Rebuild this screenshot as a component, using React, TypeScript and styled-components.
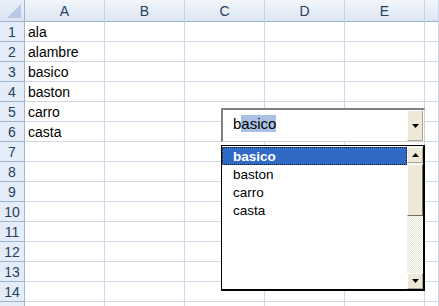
import styled, { createGlobalStyle } from "styled-components";

const GlobalStyle = createGlobalStyle`
  html, body {
    margin: 0;
    padding: 0;
    background: #ffffff;
    overflow: hidden;
  }
`;

const COLS = ["A", "B", "C", "D", "E", ""];
const ROW_COUNT = 15;
const LABELED_ROWS = 14;
const DATA: Record<number, string> = {
  1: "ala",
  2: "alambre",
  3: "basico",
  4: "baston",
  5: "carro",
  6: "casta",
};
const ITEMS = ["basico", "baston", "carro", "casta"];

const Sheet = styled.div`
  position: relative;
  display: grid;
  grid-template-columns: 25px repeat(5, 80px) 1fr;
  grid-template-rows: 22px;
  grid-auto-rows: 20px;
  width: 439px;
  height: 306px;
  overflow: hidden;
  font-family: "Liberation Sans", Arial, sans-serif;
  font-size: 14px;
  color: #000;
`;

const Corner = styled.div`
  position: relative;
  background: linear-gradient(#e9eff8, #dbe5f2);
  border-right: 1px solid #9eb6ce;
  border-bottom: 1px solid #9eb6ce;
  box-sizing: border-box;

  &::after {
    content: "";
    position: absolute;
    right: 3px;
    bottom: 3px;
    width: 0;
    height: 0;
    border-left: 14px solid transparent;
    border-bottom: 14px solid #b7c9e2;
  }
`;

const ColHeader = styled.div`
  display: flex;
  align-items: center;
  justify-content: center;
  background: linear-gradient(#f3f6fb 0%, #e7eef7 50%, #dce6f3 100%);
  border-right: 1px solid #c5d4e6;
  border-bottom: 1px solid #9eb6ce;
  box-sizing: border-box;
  color: #27415f;
  font-size: 14px;
`;

const RowHeader = styled.div`
  display: flex;
  align-items: flex-end;
  justify-content: center;
  padding-bottom: 1px;
  background: #e4ecf7;
  border-right: 1px solid #9eb6ce;
  border-bottom: 1px solid #9eb6ce;
  box-sizing: border-box;
  color: #27415f;
  font-size: 14px;
`;

const Cell = styled.div`
  display: flex;
  align-items: flex-end;
  padding: 0 0 1px 3px;
  border-right: 1px solid #d0d7e5;
  border-bottom: 1px solid #d0d7e5;
  box-sizing: border-box;
  white-space: nowrap;
`;

const Combo = styled.div`
  position: absolute;
  left: 221px;
  top: 108px;
  width: 204px;
  height: 34px;
  display: flex;
  box-sizing: border-box;
  border-top: 2px solid #808080;
  border-left: 2px solid #808080;
  border-right: 1px solid #d4d0c8;
  border-bottom: 1px solid #d4d0c8;
  background: #fff;
`;

const EditArea = styled.div`
  flex: 1;
  display: flex;
  align-items: center;
  padding: 0 0 4px 10px;
  font-size: 15px;
`;

const Highlight = styled.span`
  background: #a9c0e4;
`;

const ArrowButton = styled.div<{ $tall?: boolean }>`
  width: 16px;
  height: ${(p) => (p.$tall ? "100%" : "16px")};
  display: flex;
  align-items: center;
  justify-content: center;
  background: #ece9d8;
  box-sizing: border-box;
  border-top: 1px solid #fff;
  border-left: 1px solid #fff;
  border-right: 1px solid #aca899;
  border-bottom: 1px solid #aca899;
  flex-shrink: 0;
`;

const ComboButtonWrap = styled.div`
  display: flex;
  padding: 0 1px 0 0;
  align-items: stretch;
`;

const ListBox = styled.div`
  position: absolute;
  left: 221px;
  top: 145px;
  width: 204px;
  height: 146px;
  display: flex;
  box-sizing: border-box;
  border: 1px solid #000;
  border-bottom-width: 2px;
  border-right-width: 2px;
  background: #fff;
`;

const Items = styled.div`
  flex: 1;
  display: flex;
  flex-direction: column;
  padding-top: 1px;
`;

const Item = styled.div<{ $selected?: boolean }>`
  height: 18px;
  display: flex;
  align-items: center;
  padding-left: 10px;
  box-sizing: border-box;
  font-size: 13.5px;
  color: ${(p) => (p.$selected ? "#fff" : "#000")};
  font-weight: ${(p) => (p.$selected ? 700 : 400)};
  background: ${(p) => (p.$selected ? "#316ac5" : "transparent")};
  border: 1px dotted ${(p) => (p.$selected ? "#1a1a1a" : "transparent")};
`;

const ScrollBar = styled.div`
  width: 16px;
  display: flex;
  flex-direction: column;
  padding: 1px 0 0;
  background-color: #f4f3ee;
  background-image: repeating-conic-gradient(#ffffff 0 25%, #e6e3d3 0 50%);
  background-size: 2px 2px;
`;

const Track = styled.div`
  flex: 1;
  display: flex;
  flex-direction: column;
  padding-top: 1px;
`;

const Thumb = styled.div`
  height: 52px;
  background: #ece9d8;
  box-sizing: border-box;
  border-top: 1px solid #fff;
  border-left: 1px solid #fff;
  border-right: 1px solid #716f64;
  border-bottom: 1px solid #716f64;
`;

function Arrow({ up }: { up?: boolean }) {
  return (
    <svg width="7" height="4" viewBox="0 0 7 4">
      <polygon
        points={up ? "3.5,0 7,4 0,4" : "0,0 7,0 3.5,4"}
        fill="#000"
      />
    </svg>
  );
}

export default function App() {
  return (
    <>
      <GlobalStyle />
      <Sheet>
        <Corner />
        {COLS.map((c, i) => (
          <ColHeader key={i}>{c}</ColHeader>
        ))}
        {Array.from({ length: ROW_COUNT }, (_, r) => (
          <Row key={r} n={r + 1} />
        ))}
        <Combo>
          <EditArea>
            b<Highlight>asico</Highlight>
          </EditArea>
          <ComboButtonWrap>
            <ArrowButton $tall>
              <Arrow />
            </ArrowButton>
          </ComboButtonWrap>
        </Combo>
        <ListBox>
          <Items>
            {ITEMS.map((it, i) => (
              <Item key={it} $selected={i === 0}>
                {it}
              </Item>
            ))}
          </Items>
          <ScrollBar>
            <ArrowButton>
              <Arrow up />
            </ArrowButton>
            <Track>
              <Thumb />
            </Track>
            <ArrowButton>
              <Arrow />
            </ArrowButton>
          </ScrollBar>
        </ListBox>
      </Sheet>
    </>
  );
}

function Row({ n }: { n: number }) {
  return (
    <>
      <RowHeader>{n <= LABELED_ROWS ? n : ""}</RowHeader>
      {COLS.map((c, i) => (
        <Cell key={i}>{i === 0 ? DATA[n] ?? "" : ""}</Cell>
      ))}
    </>
  );
}
